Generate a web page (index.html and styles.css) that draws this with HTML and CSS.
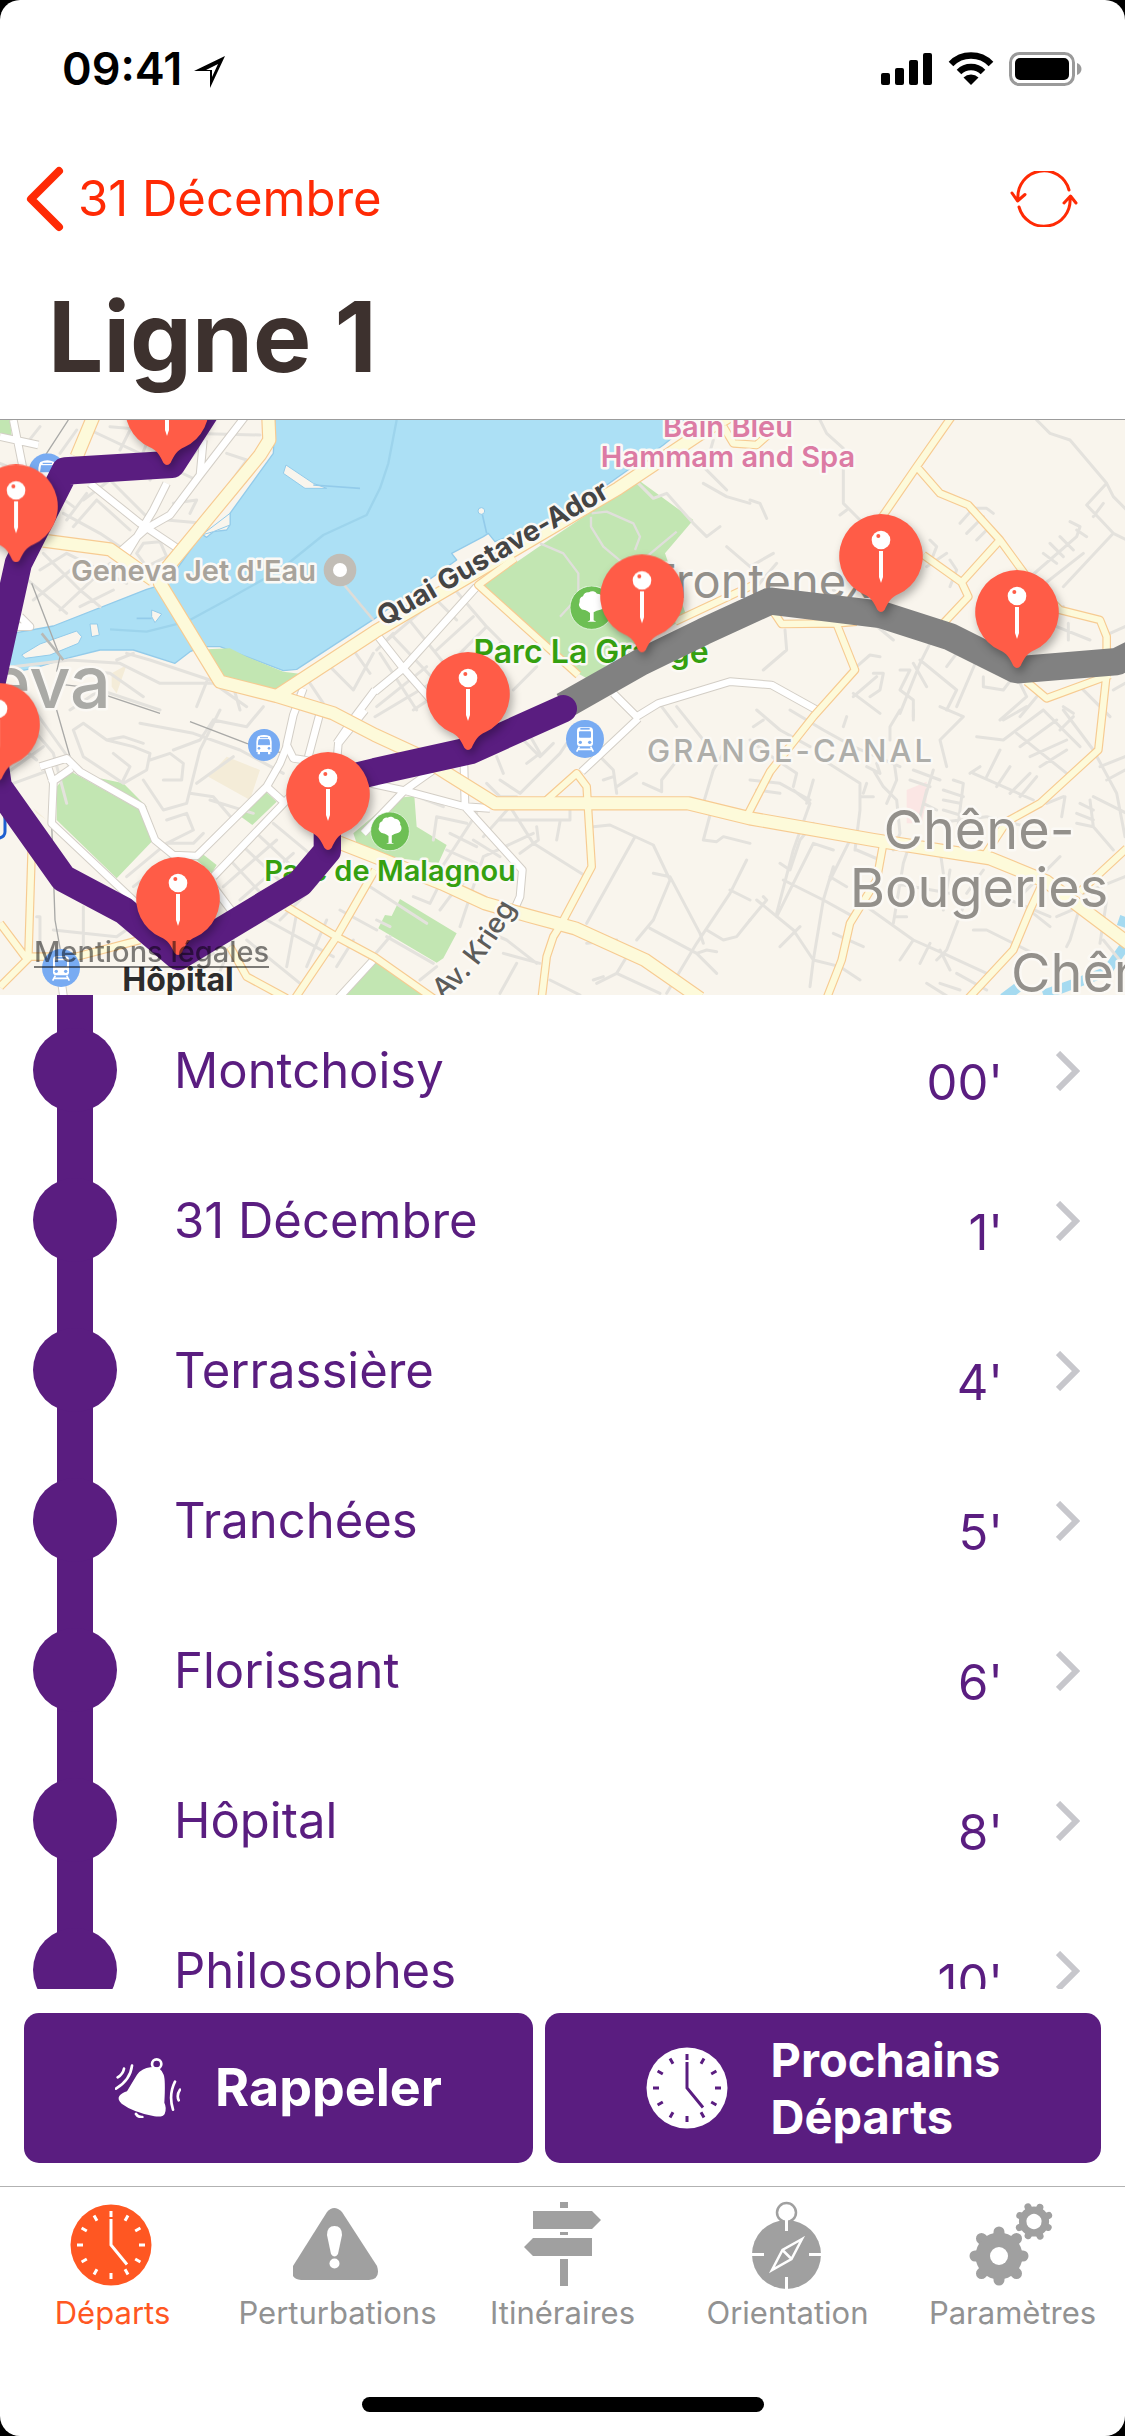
FILE: index.html
```
<!DOCTYPE html>
<html lang="fr">
<head>
<meta charset="utf-8">
<meta name="viewport" content="width=device-width, initial-scale=1">
<title>Ligne 1</title>
<link rel="stylesheet" href="styles.css">
</head>
<body>
<div class="screen">
  <div class="status">
    <div class="status-left">
      <span class="time">09:41</span>
      <svg class="icon-location" width="34" height="34" viewBox="0 0 34 34"><path d="M33 1 2 16H18V33Z"/><path d="M26 9 14 15H20V22Z" fill="#fff"/></svg>
    </div>
    <div class="status-right">
      <svg width="52" height="34" viewBox="0 0 52 34"><rect x="0" y="21" width="9" height="12" rx="2"/><rect x="14" y="16" width="9" height="17" rx="2"/><rect x="28" y="8" width="9" height="25" rx="2"/><rect x="42" y="1" width="9" height="32" rx="2"/></svg>
      <svg width="46" height="34" viewBox="0 0 46 34"><path d="M23 33 15.500 25.500A11 11 0 0 1 30.500 25.500Z"/><path d="M11 20A17 17 0 0 1 35 20" fill="none" stroke="#000" stroke-width="6.500"/><path d="M3 12A28 28 0 0 1 43 12" fill="none" stroke="#000" stroke-width="6.500"/></svg>
      <svg width="74" height="34" viewBox="0 0 74 34"><rect x="1.500" y="1.500" width="63" height="31" rx="9" fill="none" stroke="#9a9a9a" stroke-width="3"/><rect x="6" y="6" width="54" height="22" rx="5"/><path d="M68 11C74 13 74 21 68 23Z" fill="#9a9a9a"/></svg>
    </div>
  </div>

  <header class="header">
    <nav class="navbar">
      <a class="back" href="#">
        <svg width="40" height="66" viewBox="0 0 40 66"><path d="M34 5 6 33 34 61" fill="none" stroke="currentColor" stroke-width="8" stroke-linecap="round" stroke-linejoin="round"/></svg>
        <span>31 Décembre</span>
      </a>
      <button class="refresh" type="button" aria-label="Actualiser">
        <svg width="68" height="56" viewBox="0 0 68 56" fill="none" stroke="currentColor" stroke-width="3" stroke-linecap="round" stroke-linejoin="round"><path d="M8 28A26 26 0 0 1 59 19M60 27A26 26 0 0 1 9 36M2 22 7.500 30 15 23.500M54 32 60.500 25 66 32"/></svg>
      </button>
    </nav>
    <h1 class="title">Ligne 1</h1>
  </header>

  <section class="map">
    <svg class="map-canvas" viewBox="0 0 1125 575">
      <defs>
        <symbol id="pin" viewBox="0 0 270 330" overflow="visible">
          <path d="M135 9A126 126 0 0 1 188 249C165 259 158 272 146 296Q135 310 124 296C112 272 105 259 82 249A126 126 0 0 1 135 9Z" fill="#ff5c47"/>
          <circle cx="135" cy="87" r="28" fill="#fff"/><circle cx="127" cy="75" r="6" fill="#ff5c47"/>
          <path d="M129 120H141V198L135 216 129 198Z" fill="#fff"/>
        </symbol>
        <symbol id="tree" viewBox="0 0 132 132">
          <circle cx="66" cy="66" r="65" fill="#6dbf54" stroke="#fff" stroke-width="2"/>
          <path d="M61 104V82Q54 76 46 73A17 17 0 0 1 30 48A15 15 0 0 1 40 32A17 17 0 0 1 58 20A17 17 0 0 1 82 24A17 17 0 0 1 100 44A17 17 0 0 1 92 72Q80 74 72 80V104L80 108H53Z" fill="#fff"/>
        </symbol>
        <symbol id="train" viewBox="0 0 114 114">
          <circle cx="57" cy="57" r="57" fill="#78abf2"/>
          <path d="M42 22H72Q80 22 81 32V70Q81 79 72 79H42Q33 79 33 70V32Q34 22 42 22Z" fill="#fff"/>
          <rect x="43" y="24" width="28" height="5" fill="#78abf2"/><rect x="39" y="34" width="36" height="19" rx="3" fill="#78abf2"/>
          <circle cx="43" cy="67" r="5" fill="#78abf2"/><circle cx="71" cy="67" r="5" fill="#78abf2"/>
          <path d="M40 80 32 95M74 80 82 95M36 88H78" stroke="#fff" stroke-width="5"/>
        </symbol>
        <symbol id="bus" viewBox="0 0 96 96">
          <circle cx="48" cy="48" r="48" fill="#78abf2"/>
          <path d="M30 22Q48 14 66 22Q70 26 71 38V69H67V76H60V69H36V76H29V69H25V38Q26 26 30 22Z" fill="#fff"/>
          <path d="M36 26H60M33 32H63L65 47H31Z" fill="#78abf2" stroke="#78abf2" stroke-width="3"/><circle cx="33" cy="58" r="4" fill="#78abf2"/><circle cx="63" cy="58" r="4" fill="#78abf2"/>
        </symbol>
        <path id="krieg" d="M442 580Q482 551 520 480"/>
        <g id="white-roads">
          <path d="M735-10 600 165 510 285 440 325 355 400M610 60 600 165M500 190 460 270 378 405M270 190 420 310 540 390M40 0 68 140M0 50 115 75M30 620H90L60 590"/>
          <path d="M910 805 880 885 860 975 880 1015 1010 1035M1125 810 1065 890 1010 970M965 860 925 1010M1095 870 1015 970 1010 1030M1135 650 1210 745 1320 870M1430 500 1210 745 1125 815M1840 820 1910 890 1975 850 2190 785 2315 795 2450 870M1915 895 1745 1055M1110 1090 1215 1112 1395 1160 1470 1165M1392 1035 1395 1160 1567 1350 1560 1430 1540 1475M1300 1050 1215 1110 1090 1240"/>
          <path d="M120 1040 200 1015 240 1055 425 1160 465 1260 520 1305 590 1308 800 1100 840 1030 860 980M145 1045 160 1090 155 1210 410 1450M150 1090 215 1045M870 1130 640 1370M800 1100 855 1150M640 1400 700 1480M1125 1615 1010 1740M185 1690 192 1740"/>
        </g>
        <g id="small-yellow-roads">
          <path d="M2855-10 2750 140 2640 300M2750 140 2820 220 2905 255 3000 360 3080 470 3180 570 3300 600 3320 650V760L3295 990 3120 1150 3020 1205 2955 1305M3000 360 2885 487 2770 405M2885 487 2905 530 2830 610M2320 575 2345 612 2510 610 2570 605M2510 612 2565 750 2440 890 2310 1055 2240 1190M3080 785 3140 835 3330 765M2650 1270 2630 1380 2550 1510 2525 1620 2480 1735M3125 1395 3090 1470 3040 1590 2905 1735M3380 1285 3240 1415"/>
          <path d="M1640 1140 1730 1060 1760 1100 1775 1340 1685 1510 1660 1550 1640 1610 1625 1735M1545 415 1435 495 1735 765M1125 1350 1010 1550 885 1735M860 1460 1010 1550 1125 1612 1300 1735M95 1290 85 1615 0 1700M0 1510 75 1610 230 1610 420 1560M690 1580 740 1670 860 1735M2170 20 2200 70 2270 75 2310 40M2025 605 2270 490"/>
        </g>
        <g id="main-roads">
          <path d="M280-10 230 110M130 362 330 388 460 480M805-10 808 60 780 105 500 445 480 490 660 785 830 828 1000 880 1125 945 1255 1005 1340 1060 1485 1150H2065L2250 1195 2620 1260 2970 1315 3140 1385 3385 1570M830 828 1125 635 1855 205 2125 25 2200-20M1010 1265 1125 1310 1325 1390 1455 1450 1585 1487 1725 1525 1935 1620 2100 1735"/>
        </g>
      </defs>

      <g transform="scale(.333333)" stroke-linejoin="round">
        <rect width="3375" height="1725" fill="#f9f5ed"/>
        <!-- lake, Rhône and Seymaz -->
        <path d="M825-5 820 100 690 280V315L680 330 640 335 620 352 605 342 500 490 440 508 160 618-5 648V765L100 745 200 715 300 690H400L525 730 570 695 610 680H660L850 752 890 748 1125 595 1370 420 1355 400 1450 350 1465 340 1485 365 1700 280 1990 75 2090-5Z" fill="#ace0f5" stroke="#93cbea" stroke-width="4"/>
        <path d="M3010 1735 3070 1690M3130 1725 3240 1685 3320 1655 3380 1570M3375 1490 3365 1520" fill="none" stroke="#a5daf0" stroke-width="30"/>
        <path d="M1125 235 1100 285 970 345 840 450 680 540 560 605 440 635 330 628M1190 0 1165 130 1140 205 1125 235" fill="none" stroke="#9dd4ec" stroke-width="7"/>
        <path d="M858 135 940 190 980 205 915 205 850 160ZM65 705 120 672 230 633 245 650 235 670 150 705 75 715ZM270 612H292L298 645 275 650ZM455 570 485 582 465 608 455 590ZM605 345 690 280V315L640 335Z" fill="#f9f5ed" stroke="#93cbea" stroke-width="3"/>
        <path d="M940 195 1080 205M410 595 455 595M1445 275 1460 340" fill="none" stroke="#93cbea" stroke-width="5"/><path d="M1020 480 1120 600" stroke="#dedcd7" stroke-width="8"/><circle cx="1444" cy="273" r="10" fill="#f9f5ed" stroke="#93cbea" stroke-width="3"/>
        <!-- parks -->
        <g fill="#c2e6b2">
          <path d="M0 0H30L35 48 0 40ZM620 688 690 685 740 710 850 755 905 762 825 812 660 765ZM1450 495 1610 385 1915 180 2080 300 1995 400 2060 590 1760 775 1725 755ZM1185 1135 1243 1128 1250 1220 1340 1275 1315 1330 1080 1300 1060 1240ZM1200 1437 1370 1540 1330 1615 1310 1628 1135 1525 1155 1485 1175 1488Z"/>
          <path d="M1135 1620 1300 1735H1020ZM210 1053 420 1170 455 1265 350 1375 170 1200V1100ZM300 1075 370 1090 440 1160 430 1175ZM795 1113 830 1145 757 1215 720 1188ZM605 1300 650 1335 635 1360 590 1320Z"/>
        </g>
        <path d="M680 1010 780 1050 750 1140 625 1070ZM335 760 380 735 350 820 335 800ZM100 1165 140 1200 110 1180Z" fill="#f4ecd8"/><path d="M2720 1110 2780 1085V1140L2765 1210H2720Z" fill="#fbe6e4"/>
        <!-- side streets -->
        <g fill="none" stroke="#e4e2dd" stroke-width="9" stroke-linecap="round">
          <path d="M0 130 100 170 220 260M270 30 440 110 590 180M330 20 560 40 780 45M400 10 360 90M460 20 420 120M120 20 80 70M510 60 450 180M250 240 330 180 440 290M190 280 300 340 360 380M290 240 390 330M200 300 260 220M220 320 290 240M560 60 600 80 540 150M520 250 590 240 570 280M500 300 610 310M430 370 480 365 500 410 440 440 410 400ZM130 400 240 510 300 560M120 450 200 400 380 490M100 540 250 420M180 570 330 430M240 560 340 510M60 460 200 580M680 100 740 120 690 190M230 30 180 100M690 240 780 130"/>
          <path d="M0 745 210 720 360 730 480 790 640 790 740 860M380 700 450 720 630 780M620 785 590 860M700 800 720 870M210 870 300 810 480 870M240 750 330 760 430 830M930 790 970 850M1060 690 1110 760M950 770 1020 700M1130 690 1180 640M990 740 1060 810 1120 700M640 900 600 960 520 990M400 700 350 720"/>
          <path d="M220 930 250 910 320 960 400 980 450 1000 440 1050 370 1090 250 1010ZM320 960 370 950 430 970M340 1000 390 1040 370 1080M450 1020 510 1000 550 1030 545 1080H490M420 910 580 940 720 990 850 1060M660 870 600 990 560 1150 490 1170 430 1080M640 900 740 920 790 860M500 1200 560 1180 580 1230 500 1270H580L610 1240M630 1140 760 1180M570 1120 640 1130 700 1200M590 1090 700 1010M50 870 160 1000 200 1150M0 930 110 1020M20 1060 130 980M60 880 30 960M110 880 210 1020M40 1090 150 1050"/>
          <path d="M690 1320 830 1470M730 1280 880 1420M770 1240 910 1370M820 1210 940 1310M670 1400 830 1260M720 1440 880 1300M780 1470 930 1350M840 1500 970 1370M380 1370 500 1270M400 1400 530 1300M440 1420 540 1330M110 1490H120V1600M250 1460V1610M160 1530 350 1550M350 1550 450 1480M380 1420 340 1440M640 1700 700 1560M560 1640 640 1600M740 1560 900 1690M800 1500 1000 1610M890 1480 860 1640M980 1500 920 1640M1020 1470 1130 1530M1060 1560 1010 1640"/>
          <path d="M1140 700 1250 870M1180 650 1380 860M1220 590 1300 690 1420 840M1290 520 1370 600M1340 480 1460 620 1540 700M1130 620 1180 570 1270 530M1150 670 1350 500M1310 690 1420 590M1350 730 1460 620M1380 780 1500 670M1130 860 1280 740M1125 890 1310 780M1240 870 1330 810M1540 810 1610 740"/>
          <path d="M1200 1110 1330 1160M1300 1260 1310 1190 1400 1210M1500 1080 1560 1120 1680 1000 1700 970M1460 1090 1500 1130H1550M1490 1010 1510 1060M1580 1030 1620 1000 1580 930M1570 960 1620 1010 1660 970M1800 1010 1840 1050 1850 1120M1810 1080 1840 1070M1850 1100 1910 1060M1930 1090 1985 1115 1985 1080 2040 1010M2110 1150 2140 1050 2170 1000M1985 860 2030 920M2030 860 2110 960M2560 820 2640 880M1500 1200H1710V1170M1680 1205 1670 1260M1450 1250 1530 1160 1600 1270 1760 1370M1610 1220 1615 1260 1560 1300M1350 1240 1430 1280M1320 1350 1430 1180M1340 1290 1430 1330M1380 1520 1450 1310 1600 1240M1320 1470 1350 1430 1400 1380M1420 1260 1500 1310"/>
          <path d="M1780 1220 1830 1215 1960 1275 2010 1380 1960 1500 1910 1560M1905 1250 1760 1510M1960 1360 2010 1370 2100 1540 2110 1570M1950 1525 2090 1600 2150 1660M2130 1185 2110 1260 2150 1265 2170 1250 2250 1270M2240 1320 2190 1420 2090 1570 2000 1720M2190 1410 2250 1440M2120 1530 2170 1560 2210 1550 2250 1500M2090 1600 2120 1590 2150 1595M1850 1660 1980 1720M1790 1690 1850 1660 1880 1610M1780 1680 1810 1670M1650 1680 1740 1725M1500 1720 1550 1630M1450 1530 1520 1560 1610 1630M1510 1600 1620 1630M1240 1430 1290 1450 1330 1370M1110 1400 1280 1510M1130 1500 1170 1520M1160 1550 1300 1630M1110 1620 1170 1550M1260 1680 1310 1640M1760 1570 1850 1560"/>
          <path d="M1910 185 1960 235 2000 220 2080 310 2120 350 2160 320M2060 90 2130 160 2180 210M2110 190 2180 230 2250 250M2140 60 2120 130M2180 380 2250 440 2320 400M2270 500 2330 430M2460 0 2480 40 2530 85V250L2640 360M2500 510 2680 660M2520 285 2540 270M2250 240 2280 250 2300 295M3110 0 3150 40 3210 60 3320 190 3340 230 3380 270M3320 190 3260 255 3340 340M3280 290 3310 250M3340 340 3190 500M3340 340 3380 360M2880 310 2920 265H2960L2980 280M2900 340 2950 290M2930 360 2970 320M2780 440 2840 400M2790 360 2810 380 2790 430M2850 420 2870 450 2850 500M3080 480 3230 350 3240 320 3210 305M3110 510 3250 400M3150 370 3190 410M3180 350 3220 390M3130 400 3170 430M3230 330 3260 350M3040 620 3190 560M3170 620 3270 660M3205 610V660M3330 640 3375 620"/>
          <path d="M2355 630 2360 690 2290 750M2570 740 2610 705 2640 710M2560 830 2630 770M2620 760H2650L2640 810 2610 830M2700 750H2730L2700 810 2740 840V900M2740 730 2780 800M2760 720 2870 810 2840 870M2790 670 2760 730 2700 880M2840 740 2900 660M2930 720 2870 860M2950 770V800L3010 810 3040 770M3060 790 3080 830 3000 900M3110 830 3060 890M3240 800 3330 890M3190 860 3220 880M3340 810 3375 790"/>
          <path d="M2370 870 2470 930 2560 980 2700 1040M2530 920 2540 890M2270 870 2340 930 2430 980M2250 960 2300 1000 2390 1060 2380 1100M2260 920 2290 900M2270 1110 2340 1120M2250 1080 2340 1090 2430 1140M2380 1110 2430 1150 2380 1290 2330 1480M2440 1080 2420 1150M2470 1020 2580 1090 2580 1170 2565 1290M2580 1130H2620M2590 1120 2600 1090M2620 1050 2650 1100 2690 1140 2700 1240 2680 1290M2600 1040 2640 1060 2630 1030M2680 1010 2690 1080 2660 1150M2740 870V890M2700 870 2670 920V960M2820 860 2890 890 2820 960 2840 1040M2740 1050 2820 1080M2730 1080 2790 1100M2800 1050 2770 1150 2810 1170M2780 1110 2760 1190M2860 1080 2890 1090 2870 1250M2830 1110 2890 1130M2830 1140 2880 1150M2830 1170 2880 1185M2800 1210 2960 1190 3080 1220M2930 950 3010 960 3130 870M3010 900 3080 860M2920 1060 3100 1140M2960 1070 3000 990M2990 1100 3030 1040M3030 1120 3090 1060M3060 1130 3110 1070M2940 1040 2910 1060M3050 940 3200 1060M3060 980 3170 900M3090 1010 3200 960M3120 1040 3200 990M3130 870 3240 980M3190 870 3280 990 3350 1120 3375 1250M3180 930 3220 890M3300 1040 3375 1010M3320 1080 3375 1050M3280 1130 3380 1180M3270 1140 3280 1220 3340 1290M3240 1150 3280 1170M3230 1180 3280 1200M3230 1210 3280 1220M3190 1130 3140 1150M3195 1130 3185 1190"/>
          <path d="M2270 1440 2380 1530 2440 1620 2520 1640 2580 1680M2330 1490 2440 1270 2500 1290M2340 1580 2400 1520M2250 1500 2300 1440 2290 1430M2350 1380 2470 1440 2560 1490M2340 1330 2370 1350 2400 1260 2440 1210M2430 1700 2440 1620 2470 1440 2500 1340M2500 1540 2590 1580M2490 1380 2560 1240M2570 1290 2640 1320M2490 1370 2540 1400M2600 1460 2740 1560 2830 1600 2960 1660M2680 1510 2710 1330 2720 1300M2690 1490 2720 1490M2700 1620 2740 1560M2760 1630 2790 1570M2810 1620 2840 1590 2890 1460M2820 1590 2850 1650M2820 1290 2830 1360M2680 1390 2850 1420M2830 1470 2850 1350M2920 1530H2960L3100 1600M2870 1660 2960 1710M2820 1690 2880 1710M2780 1690 2860 1740M2900 1420 2950 1350M3060 1430 3150 1340 3180 1310M3030 1440 3150 1490M3100 1480 3150 1520M3170 1490 3240 1460 3210 1560 3200 1580M3320 1440 3300 1570M3310 1560 3375 1640M3250 1420 3375 1370"/>
        </g>
        <g fill="none" stroke="#a9a9a7" stroke-width="4"><path d="M205 0 130 115M95 490 180 710 170 755M160 790 240 800 480 880M170 870 210 1010M570 905 740 970 850 1000M155 1210 165 1500 190 1640"/></g>
        <g fill="none" stroke="#b9b9b5" stroke-width="8"><path d="M125 640 190 720"/></g>
        <g fill="none" stroke="#e0dfdb" stroke-width="7"><path d="M1620 370 1690 400 1735 460V530L1680 590M1775 280 1820 275 1900 310 1920 350 1905 390M1773 290V320L1810 380 1870 430M1940 410 2030 335"/></g>

        <use href="#white-roads" fill="none" stroke="#d3cec6" stroke-width="26"/>
        <use href="#white-roads" fill="none" stroke="#fff" stroke-width="20"/>
        <use href="#small-yellow-roads" fill="none" stroke="#f7cb92" stroke-width="26"/>
        <use href="#main-roads" fill="none" stroke="#f7cb92" stroke-width="43"/>
        <use href="#small-yellow-roads" fill="none" stroke="#fdfada" stroke-width="19"/>
        <use href="#main-roads" fill="none" stroke="#fdfada" stroke-width="36"/>
        <path d="M-5 1165Q15 1165 15 1200V1235Q15 1250-5 1255" fill="none" stroke="#1e5fd0" stroke-width="9"/>
      </g>

      <g class="label">
        <text class="place" x="71" y="161">Geneva Jet d'Eau</text>
        <text class="city" x="111" y="288" text-anchor="end">Geneva</text>
        <text class="spa" x="728" y="17" text-anchor="middle">Bain Bleu</text>
        <text class="spa" x="728" y="47" text-anchor="middle">Hammam and Spa</text>
        <text class="park park-large" x="591" y="243" text-anchor="middle">Parc La Grange</text>
        <text class="park" x="390" y="461" text-anchor="middle">Parc de Malagnou</text>
        <text class="road" x="0" y="0" transform="translate(384 207) rotate(-30)">Quai Gustave-Ador</text>
        <text class="street"><textPath href="#krieg">Av. Krieg</textPath></text>
        <text class="suburb" x="760" y="178" text-anchor="middle">Frontenex</text>
        <text class="quarter" x="791" y="342" text-anchor="middle">GRANGE-CANAL</text>
        <text class="town" x="979" y="429" text-anchor="middle">Chêne-</text>
        <text class="town" x="979" y="487" text-anchor="middle">Bougeries</text>
        <text class="town" x="1011" y="572">Chêne</text>
        <text class="stop-label" x="178" y="571" text-anchor="middle">Hôpital</text>
      </g>

      <g transform="scale(.333333)">
        <circle cx="1020" cy="450" r="49" fill="#c1bdb6"/><circle cx="1020" cy="450" r="21" fill="#fff"/>
        <use href="#tree" x="1709" y="497" width="132" height="132"/>
        <use href="#tree" x="1111" y="1175" width="118" height="118"/>
        <use href="#train" x="1698" y="900" width="114" height="114"/>
        <use href="#train" x="126" y="1587" width="114" height="114"/>
        <use href="#bus" x="744" y="927" width="96" height="96"/>
        <use href="#bus" x="86" y="100" width="112" height="112"/>
        <g fill="none" stroke-width="82" stroke-linejoin="bevel">
          <path d="M1690 858 1925 725 2110 635 2310 543 2640 583 2850 650 3050 750 3350 725 3420 690" stroke="#818181"/>
          <path d="M1690 866 1410 992 1125 1055 982 1090V1293L900 1390 535 1610 372 1472 190 1375-5 1100-40 860 55 430 195 153 515 133 620-30" stroke="#5a1d80" stroke-linecap="round" stroke-linejoin="round"/>
        </g>
        <g class="pins">
          <use href="#pin" x="366" y="-168" width="270" height="330"/>
          <use href="#pin" x="-87" y="124" width="270" height="330"/>
          <use href="#pin" x="-141" y="779" width="270" height="330"/>
          <use href="#pin" x="399" y="1302" width="270" height="330"/>
          <use href="#pin" x="849" y="987" width="270" height="330"/>
          <use href="#pin" x="1269" y="687" width="270" height="330"/>
          <use href="#pin" x="1791" y="394" width="270" height="330"/>
          <use href="#pin" x="2508" y="273" width="270" height="330"/>
          <use href="#pin" x="2916" y="441" width="270" height="330"/>
        </g>
      </g>
    </svg>
    <a class="legal" href="#">Mentions légales</a>
  </section>

  <ul class="stops">
    <li><a class="stop" href="#"><span class="marker"></span><span class="name">Montchoisy</span><span class="minutes">00'</span><svg class="chevron" width="24" height="40" viewBox="0 0 24 40"><path d="M2 2 20 20 2 38"/></svg></a></li>
    <li><a class="stop" href="#"><span class="marker"></span><span class="name">31 Décembre</span><span class="minutes">1'</span><svg class="chevron" width="24" height="40" viewBox="0 0 24 40"><path d="M2 2 20 20 2 38"/></svg></a></li>
    <li><a class="stop" href="#"><span class="marker"></span><span class="name">Terrassière</span><span class="minutes">4'</span><svg class="chevron" width="24" height="40" viewBox="0 0 24 40"><path d="M2 2 20 20 2 38"/></svg></a></li>
    <li><a class="stop" href="#"><span class="marker"></span><span class="name">Tranchées</span><span class="minutes">5'</span><svg class="chevron" width="24" height="40" viewBox="0 0 24 40"><path d="M2 2 20 20 2 38"/></svg></a></li>
    <li><a class="stop" href="#"><span class="marker"></span><span class="name">Florissant</span><span class="minutes">6'</span><svg class="chevron" width="24" height="40" viewBox="0 0 24 40"><path d="M2 2 20 20 2 38"/></svg></a></li>
    <li><a class="stop" href="#"><span class="marker"></span><span class="name">Hôpital</span><span class="minutes">8'</span><svg class="chevron" width="24" height="40" viewBox="0 0 24 40"><path d="M2 2 20 20 2 38"/></svg></a></li>
    <li><a class="stop" href="#"><span class="marker"></span><span class="name">Philosophes</span><span class="minutes">10'</span><svg class="chevron" width="24" height="40" viewBox="0 0 24 40"><path d="M2 2 20 20 2 38"/></svg></a></li>
  </ul>

  <div class="actions">
    <button class="action action-remind" type="button">
      <svg width="66" height="60" viewBox="42 54 198 180" fill="none" stroke="#fff" stroke-linecap="round">
        <circle cx="167" cy="72" r="14" stroke-width="8"/>
        <path d="M148 82Q178 76 188 104Q194 120 190 188Q198 204 191 222Q187 232 160 229Q95 216 62 191Q48 178 55 168Q60 160 78 154Q86 140 108 104Q124 84 148 82Z" fill="#fff" stroke="none"/>
        <path d="M93 77Q88 120 45 146M69 86Q66 102 50 112M222 125Q202 165 216 209M237 149Q226 165 233 181M105 222Q111 232 124 231" stroke-width="8"/>
      </svg>
      <span>Rappeler</span>
    </button>
    <button class="action action-next" type="button">
      <svg class="clock" width="82" height="82" viewBox="0 0 82 82"><circle cx="41" cy="41" r="40.500" fill="#fff"/><g stroke="#5a1d80"><use href="#clock-face"/></g></svg>
      <span>Prochains<br>Départs</span>
    </button>
  </div>

  <nav class="tabs">
    <a class="tab tab-active" href="#">
      <svg width="90" height="90" viewBox="-2 0 90 90">
        <defs><g id="clock-face" fill="none" stroke-width="3"><path d="M41 15V41L57 60.500"/><path d="M41 7V13M41 69V75M7 41H13M69 41H75M24 11.600 27 16.800M58 11.600 55 16.800M24 70.400 27 65.200M58 70.400 55 65.200M11.600 24 16.800 27M70.400 24 65.200 27M11.600 58 16.800 55M70.400 58 65.200 55"/></g></defs>
        <g transform="translate(0 4)"><circle cx="41" cy="41" r="40.500" fill="currentColor"/><use href="#clock-face" stroke="#fff"/></g>
      </svg>
      <span>Départs</span>
    </a>
    <a class="tab" href="#">
      <svg class="tab-icon" width="90" height="90" viewBox="2 0 90 90"><path d="M36 12Q43 4 51 12L86 66Q90 79 78 80H10Q-2 79 2 66Z"/><path d="M36 35Q36 26 43.500 26T51 35L47 54Q43.500 59 40 54Z" fill="#fff"/><circle cx="43.500" cy="63.500" r="5" fill="#fff"/></svg>
      <span>Perturbations</span>
    </a>
    <a class="tab" href="#">
      <svg class="tab-icon" width="90" height="90" viewBox="0 0 90 90"><path d="M42 2H50V8H42ZM15 11H74L83 20 74 29H15ZM42 32H50V35H42ZM74 38V56H15L6 47 15 38ZM42 59H50V86H42Z"/></svg>
      <span>Itinéraires</span>
    </a>
    <a class="tab" href="#">
      <svg class="tab-icon" width="90" height="90" viewBox="0 0 90 90"><circle cx="43.500" cy="54.500" r="34.500"/><circle cx="43.500" cy="12.500" r="9.500" fill="#fff" stroke="#a0a0a0" stroke-width="2.500"/><path d="M43.500 19V31M43.500 77V90M8 54.500H21M66 54.500H79" stroke="#fff" stroke-width="3"/><path d="M59 39 39.500 50 29 70 48.500 59ZM39.500 50 48.500 59" fill="none" stroke="#fff" stroke-width="2.500"/></svg>
      <span>Orientation</span>
    </a>
    <a class="tab" href="#">
      <svg class="tab-icon" width="90" height="90" viewBox="0 0 90 90">
        <defs><g id="teeth" fill="none" stroke="#a0a0a0" stroke-width="11" stroke-linecap="round"><path d="M0-24V24M-24 0H24M-17.500-17.500 17.500 17.500M-17.500 17.500 17.500-17.500"/></g></defs>
        <g transform="translate(31 56)"><use href="#teeth"/><circle r="23.500"/><circle r="9" fill="#fff"/></g>
        <g transform="translate(66 21.500) rotate(22.500) scale(.64)"><use href="#teeth"/><circle r="23.500"/><circle r="12" fill="#fff"/></g>
      </svg>
      <span>Paramètres</span>
    </a>
  </nav>
  <div class="home"><div class="home-bar"></div></div>
</div>
</body>
</html>
```
FILE: styles.css
```
* { box-sizing: border-box; }

body {
  margin: 0;
  background: #000;
  font-family: Inter, "Liberation Sans", sans-serif;
  color: #000;
}

a { color: inherit; text-decoration: none; }

button {
  margin: 0;
  padding: 0;
  border: 0;
  background: none;
  color: inherit;
  font: inherit;
}

svg { display: block; flex: none; }

.screen {
  display: flex;
  flex-direction: column;
  height: 100vh;
  overflow: hidden;
  border-radius: 20px;
  background: #fff;
}

.status {
  display: flex;
  justify-content: space-between;
  padding: 49px 42px 44px 62px;
}

.status-left, .status-right { display: flex; align-items: center; }
.status-left { gap: 10px; }
.status-right { gap: 15px; }
.icon-location { margin-top: 6px; }

.time {
  font-size: 45px;
  font-weight: 600;
  line-height: 40px;
}

.header { border-bottom: 1px solid #9c9c9c; }

.navbar {
  display: flex;
  align-items: center;
  justify-content: space-between;
  height: 132px;
  padding: 0 47px 0 25px;
  color: #ff2a05;
}

.back {
  display: flex;
  align-items: center;
  gap: 13px;
  font-size: 49px;
  line-height: 60px;
}

.title {
  margin: 0;
  padding: 12px 48px 22px;
  font-size: 98px;
  font-weight: 700;
  line-height: 120px;
  color: #3d312e;
}

.map { position: relative; }
.map-canvas { width: 100%; height: auto; overflow: hidden; }

.label {
  stroke: #fbf9f5;
  stroke-width: 5px;
  stroke-linejoin: round;
  paint-order: stroke;
}

.place { font-size: 29px; font-weight: 600; fill: #a8a39b; }
.city { font-size: 72px; font-weight: 500; fill: #aaaaa6; }
.spa { font-size: 29px; font-weight: 600; fill: #dc7ba4; }
.park { font-size: 29px; font-weight: 600; fill: #35a010; }
.park-large { font-size: 32px; }
.road { font-size: 28px; font-weight: 700; fill: #444; }
.street { font-size: 28px; font-weight: 500; fill: #5c5c5a; }
.suburb { font-size: 47px; fill: #93908b; }
.quarter { font-size: 31px; font-weight: 500; letter-spacing: 3px; fill: #aeaeaa; }
.town { font-size: 54px; fill: #93908b; }
.stop-label { font-size: 32px; font-weight: 700; fill: #2c2c2c; }

.pins { filter: drop-shadow(8px 14px 12px rgba(0, 0, 0, .3)); }

.legal {
  position: absolute;
  left: 34px;
  bottom: 27px;
  border-bottom: 2px solid;
  font-size: 29px;
  font-weight: 500;
  line-height: 28px;
  color: rgba(0, 0, 0, .5);
}

.stops {
  flex: 1 1 0;
  min-height: 0;
  margin: 0;
  padding: 0;
  overflow-y: auto;
  scrollbar-width: none;
  list-style: none;
}

.stop {
  display: flex;
  align-items: center;
  height: 150px;
  padding: 0 45px 0 33px;
  font-size: 49px;
  line-height: 60px;
  color: #5a1d80;
}

.marker {
  display: grid;
  justify-items: center;
  align-items: center;
  align-self: stretch;
  width: 84px;
  margin-right: 57px;
  background: linear-gradient(#5a1d80, #5a1d80) center / 36px 100% no-repeat;
}

.marker::before {
  content: "";
  width: 84px;
  height: 84px;
  border-radius: 50%;
  background: #5a1d80;
}

.name { flex: 1; padding-top: 2px; }
.minutes { padding-top: 26px; margin-right: 53px; }
.chevron { margin-top: 2px; fill: none; stroke: #c7c7cc; stroke-width: 6px; }

.actions {
  display: grid;
  grid-template-columns: 509fr 556fr;
  gap: 12px;
  padding: 24px 24px 23px;
}

.action {
  display: flex;
  align-items: center;
  justify-content: center;
  min-height: 150px;
  border-radius: 15px;
  background: #5a1d80;
  color: #fff;
  font-weight: 700;
  text-align: left;
}

.action-remind { gap: 34px; font-size: 52px; line-height: 60px; }
.action-next { gap: 43px; font-size: 47px; line-height: 57px; }

.tabs {
  display: grid;
  grid-template-columns: repeat(5, 1fr);
  padding-top: 13px;
  border-top: 1px solid #b2b2b2;
}

.tab {
  display: flex;
  flex-direction: column;
  align-items: center;
  font-size: 31px;
  font-weight: 400;
  line-height: 46px;
  color: #929292;
}

.tab-active { color: #ff5722; }
.tab-icon { fill: #a0a0a0; }

.home { padding: 61px 0 24px; }

.home-bar {
  width: 402px;
  height: 15px;
  margin: 0 auto;
  border-radius: 8px;
  background: #000;
}
```
